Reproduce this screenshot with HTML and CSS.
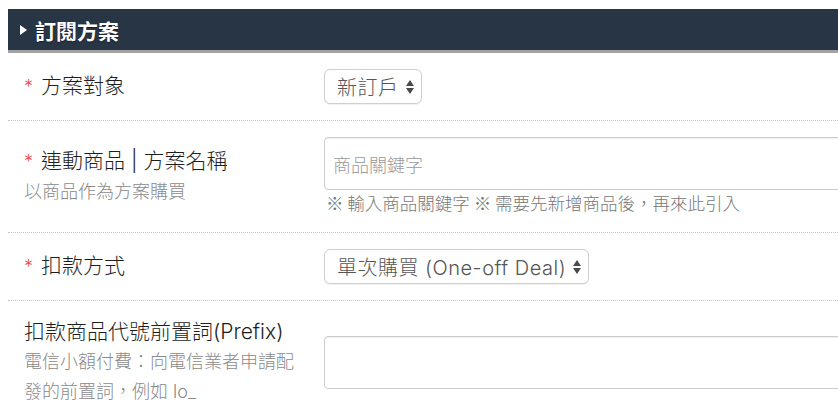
FILE: index.html
```html
<!DOCTYPE html>
<html lang="zh-Hant">
<head>
<meta charset="utf-8">
<title>訂閱方案</title>
<link rel="stylesheet" href="styles.css">
</head>
<body>
<div class="page">
  <div class="section-head"><span class="caret"></span><span>訂閱方案</span></div>

  <div class="row">
    <div class="label">
      <div class="title"><span class="req">*</span>方案對象</div>
    </div>
    <div class="field">
      <div class="select">新訂戶<svg class="arrows" width="8" height="14" viewBox="0 0 8 14"><path d="M4 0 L8 6 L0 6 Z M0 8 L8 8 L4 14 Z" fill="#4a4a4a"/></svg></div>
    </div>
  </div>

  <div class="row">
    <div class="label">
      <div class="title"><span class="req">*</span>連動商品 | 方案名稱</div>
      <div class="sub">以商品作為方案購買</div>
    </div>
    <div class="field">
      <div class="input"><span class="placeholder">商品關鍵字</span></div>
      <div class="help">※ 輸入商品關鍵字 ※ 需要先新增商品後，再來此引入</div>
    </div>
  </div>

  <div class="row">
    <div class="label">
      <div class="title"><span class="req">*</span>扣款方式</div>
    </div>
    <div class="field">
      <div class="select">單次購買 (One-off Deal)<svg class="arrows" width="8" height="14" viewBox="0 0 8 14"><path d="M4 0 L8 6 L0 6 Z M0 8 L8 8 L4 14 Z" fill="#4a4a4a"/></svg></div>
    </div>
  </div>

  <div class="row last">
    <div class="label">
      <div class="title">扣款商品代號前置詞(Prefix)</div>
      <div class="sub">電信小額付費：向電信業者申請配發的前置詞，例如 lo_</div>
    </div>
    <div class="field">
      <div class="input"></div>
    </div>
  </div>
</div>
</body>
</html>
```

FILE: styles.css
```css
html, body {
  margin: 0;
  padding: 0;
  background: #fff;
  overflow: hidden;
}
body {
  padding: 9px 0 0 8px;
  font-family: "Inter", "Noto Sans CJK TC", sans-serif;
  color: #222;
}
.page {
  width: 900px;
}
.section-head {
  height: 41px;
  background: #283545;
  border-bottom: 3px solid #a3a3a3;
  display: flex;
  align-items: center;
  padding-left: 12px;
  color: #fff;
  font-size: 21px;
  font-weight: bold;
  text-shadow: 0 1px 1px rgba(0,0,0,0.5);
}
.caret {
  width: 0;
  height: 0;
  border-top: 5px solid transparent;
  border-bottom: 5px solid transparent;
  border-left: 7px solid #fff;
  margin-right: 8px;
}
.row {
  display: grid;
  grid-template-columns: 316px 1fr;
  align-items: center;
  padding: 16px 0;
  border-bottom: 1px dotted #c4c4c4;
}
.row.last {
  border-bottom: none;
}
.label {
  padding-left: 16px;
  width: 282px;
}
.title {
  font-size: 21px;
  line-height: 30px;
  font-weight: 300;
  color: #1e1e1e;
}
.req {
  color: #f04a4a;
  font-size: 18px;
  margin-right: 8px;
}
.sub {
  font-size: 18px;
  line-height: 30px;
  font-weight: 300;
  color: #8a8a8a;
}
.field {
  display: flex;
  flex-direction: column;
  align-items: flex-start;
}
.select {
  display: inline-flex;
  align-items: center;
  height: 35px;
  box-sizing: border-box;
  padding: 0 7px 0 12px;
  border: 1px solid #cfcfcf;
  border-radius: 6px;
  background: #fff;
  box-shadow: 0 1px 1px rgba(0,0,0,0.06);
  font-size: 20px;
  font-weight: 300;
  letter-spacing: 0.5px;
  color: #555;
}
.arrows {
  margin-left: 7px;
}
.input {
  width: 560px;
  height: 53px;
  box-sizing: border-box;
  border: 1px solid #cccccc;
  border-radius: 4px;
  box-shadow: inset 0 1px 1px rgba(0,0,0,0.06);
  display: flex;
  align-items: center;
  padding-left: 8px;
}
.placeholder {
  font-size: 18px;
  font-weight: 300;
  color: #9a9a9a;
}
.help {
  font-family: "Noto Sans CJK TC", sans-serif;
  font-size: 17.5px;
  line-height: 26px;
  font-weight: 300;
  color: #777;
  margin-left: 2px;
}
```
